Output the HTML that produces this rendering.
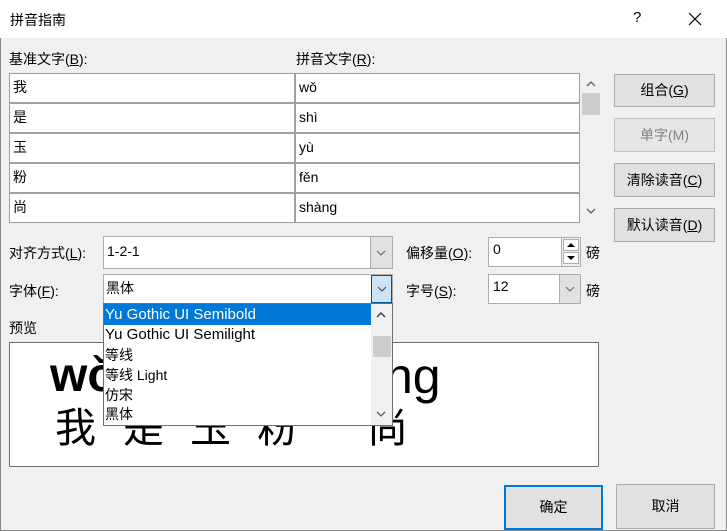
<!DOCTYPE html>
<html><head><meta charset="utf-8"><style>
*{margin:0;padding:0;box-sizing:border-box}
body{width:727px;height:531px;background:#f0f0f0;position:relative;overflow:hidden;font-family:"Liberation Sans","Noto Sans CJK SC",sans-serif;font-size:14px;color:#000}
.a{position:absolute;white-space:nowrap}
.btn{position:absolute;background:#e1e1e1;border:1px solid #adadad;text-align:center;font-size:14px}
.cell{position:absolute;background:#fff;height:28px;line-height:27px;padding-left:3px;font-size:14px}
u{text-decoration:underline}
</style></head><body>
<div class="a" style="left:0;top:0;width:727px;height:38px;background:#fff"></div>
<div class="a" style="left:10px;top:10px;font-size:14px">拼音指南</div>
<div class="a" style="left:633px;top:9px;font-size:15px">?</div>
<svg class="a" style="left:688px;top:12px" width="14" height="14"><path d="M1 1L13 13M13 1L1 13" stroke="#000" stroke-width="1.2"/></svg>
<div class="a" style="left:0;top:38px;width:1px;height:493px;background:#888"></div>
<div class="a" style="left:726px;top:38px;width:1px;height:493px;background:#888"></div>
<div class="a" style="left:0;top:530px;width:727px;height:1px;background:#888"></div>

<div class="a" style="left:9px;top:49px">基准文字(<u>B</u>):</div>
<div class="a" style="left:296px;top:49px">拼音文字(<u>R</u>):</div>

<div class="a" style="left:9px;top:73px;width:571px;height:150px;background:#a0a0a0"></div>
<div class="cell" style="left:10px;top:74px;width:284px">我</div>
<div class="cell" style="left:296px;top:74px;width:283px">wǒ</div>
<div class="cell" style="left:10px;top:104px;width:284px">是</div>
<div class="cell" style="left:296px;top:104px;width:283px">shì</div>
<div class="cell" style="left:10px;top:134px;width:284px">玉</div>
<div class="cell" style="left:296px;top:134px;width:283px">yù</div>
<div class="cell" style="left:10px;top:164px;width:284px">粉</div>
<div class="cell" style="left:296px;top:164px;width:283px">fěn</div>
<div class="cell" style="left:10px;top:194px;width:284px">尚</div>
<div class="cell" style="left:296px;top:194px;width:283px">shàng</div>

<svg class="a" style="left:585px;top:79px" width="12" height="10"><path d="M2 7L6 3L10 7" stroke="#606060" fill="none" stroke-width="1.3"/></svg>
<div class="a" style="left:582px;top:93px;width:18px;height:22px;background:#cdcdcd"></div>
<svg class="a" style="left:585px;top:206px" width="12" height="10"><path d="M2 3L6 7L10 3" stroke="#606060" fill="none" stroke-width="1.3"/></svg>

<div class="btn" style="left:614px;top:74px;width:101px;height:33px;line-height:31px">组合(<u>G</u>)</div>
<div class="btn" style="left:614px;top:118px;width:101px;height:34px;line-height:32px;color:#838383;border-color:#bfbfbf;background:#e6e6e6">单字(M)</div>
<div class="btn" style="left:614px;top:163px;width:101px;height:34px;line-height:32px">清除读音(<u>C</u>)</div>
<div class="btn" style="left:614px;top:208px;width:101px;height:34px;line-height:32px">默认读音(<u>D</u>)</div>

<div class="a" style="left:9px;top:243px">对齐方式(<u>L</u>):</div>
<div class="a" style="left:103px;top:236px;width:290px;height:33px;background:#fff;border:1px solid #adadad"></div>
<div class="a" style="left:107px;top:243px">1-2-1</div>
<div class="a" style="left:370px;top:237px;width:22px;height:31px;background:#e1e1e1;border-left:1px solid #adadad"></div>
<svg class="a" style="left:375px;top:248px" width="12" height="10"><path d="M2 3L6 7L10 3" stroke="#606060" fill="none" stroke-width="1"/></svg>

<div class="a" style="left:406px;top:243px">偏移量(<u>O</u>):</div>
<div class="a" style="left:488px;top:237px;width:93px;height:30px;background:#fff;border:1px solid #adadad"></div>
<div class="a" style="left:493px;top:241px">0</div>
<div class="a" style="left:561px;top:238px;width:19px;height:28px;background:#f0f0f0;border-left:1px solid #adadad"></div>
<div class="a" style="left:563px;top:239px;width:16px;height:12px;background:#fff;border:1px solid #adadad"></div>
<div class="a" style="left:563px;top:252px;width:16px;height:12px;background:#fff;border:1px solid #adadad"></div>
<svg class="a" style="left:566px;top:241px" width="10" height="20"><path d="M1 6L5 2L9 6Z M1 15L5 19L9 15Z" fill="#000"/></svg>
<div class="a" style="left:586px;top:243px">磅</div>

<div class="a" style="left:9px;top:281px">字体(<u>F</u>):</div>
<div class="a" style="left:103px;top:274px;width:290px;height:30px;background:#fff;border:1px solid #adadad"></div>
<div class="a" style="left:106px;top:278px">黑体</div>
<div class="a" style="left:371px;top:275px;width:21px;height:28px;background:#cce4f7;border:1px solid #005499"></div>
<svg class="a" style="left:376px;top:284px" width="12" height="10"><path d="M2 3L6 7L10 3" stroke="#404040" fill="none" stroke-width="1"/></svg>

<div class="a" style="left:406px;top:281px">字号(<u>S</u>):</div>
<div class="a" style="left:488px;top:274px;width:93px;height:30px;background:#fff;border:1px solid #adadad"></div>
<div class="a" style="left:493px;top:278px">12</div>
<div class="a" style="left:559px;top:275px;width:21px;height:28px;background:#e1e1e1;border-left:1px solid #adadad"></div>
<svg class="a" style="left:564px;top:284px" width="12" height="10"><path d="M2 3L6 7L10 3" stroke="#606060" fill="none" stroke-width="1"/></svg>
<div class="a" style="left:586px;top:281px">磅</div>

<div class="a" style="left:9px;top:318px">预览</div>
<div class="a" style="left:9px;top:342px;width:590px;height:125px;background:#fff;border:1px solid #707070"></div>
<div class="a" style="left:50px;top:348px;font-size:48px;font-weight:bold;line-height:56px">wǒ</div>
<div class="a" style="left:385px;top:348px;font-size:50px;line-height:56px">ng</div>
<div class="a" style="left:55px;top:399px;font-size:41px;line-height:50px;font-family:'Noto Sans CJK SC',sans-serif">我</div>
<div class="a" style="left:123px;top:399px;font-size:41px;line-height:50px;font-family:'Noto Sans CJK SC',sans-serif">是</div>
<div class="a" style="left:190px;top:399px;font-size:41px;line-height:50px;font-family:'Noto Sans CJK SC',sans-serif">玉</div>
<div class="a" style="left:257px;top:399px;font-size:41px;line-height:50px;font-family:'Noto Sans CJK SC',sans-serif">粉</div>
<div class="a" style="left:367px;top:399px;font-size:41px;line-height:50px;font-family:'Noto Sans CJK SC',sans-serif">尚</div>

<div class="a" style="left:103px;top:303px;width:290px;height:123px;background:#fff;border:1px solid #707070"></div>
<div class="a" style="left:104px;top:304px;width:267px;height:21px;background:#0078d7"></div>
<div class="a" style="left:105px;top:305px;color:#fff;font-size:15px;line-height:20px">Yu Gothic UI Semibold</div>
<div class="a" style="left:105px;top:325px;font-size:15px;line-height:20px">Yu Gothic UI Semilight</div>
<div class="a" style="left:105px;top:345px;font-size:14px;line-height:20px">等线</div>
<div class="a" style="left:105px;top:365px;font-size:14px;line-height:20px">等线 Light</div>
<div class="a" style="left:105px;top:385px;font-size:14px;line-height:20px">仿宋</div>
<div class="a" style="left:105px;top:404px;font-size:14px;line-height:20px">黑体</div>
<div class="a" style="left:371px;top:304px;width:21px;height:121px;background:#f0f0f0"></div>
<svg class="a" style="left:375px;top:310px" width="12" height="10"><path d="M2 7L6 3L10 7" stroke="#404040" fill="none" stroke-width="1.5"/></svg>
<div class="a" style="left:373px;top:336px;width:18px;height:21px;background:#cdcdcd"></div>
<svg class="a" style="left:375px;top:409px" width="12" height="10"><path d="M2 3L6 7L10 3" stroke="#606060" fill="none" stroke-width="1.3"/></svg>

<div class="btn" style="left:504px;top:485px;width:99px;height:45px;line-height:41px;border:2px solid #0078d7">确定</div>
<div class="btn" style="left:616px;top:484px;width:99px;height:45px;line-height:43px">取消</div>
</body></html>
